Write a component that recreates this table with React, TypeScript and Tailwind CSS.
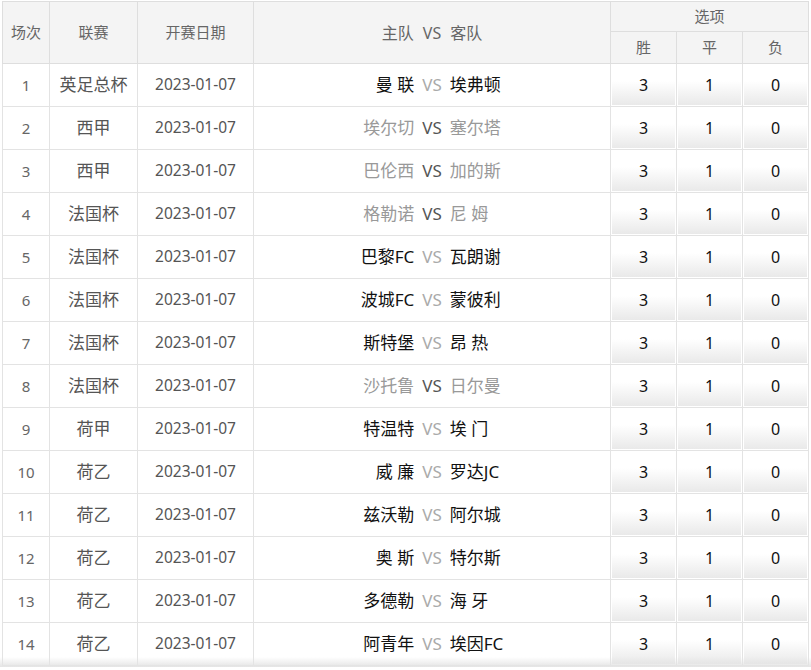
const rows: [string, string, string, boolean][] = [
  ["英足总杯", "曼 联", "埃弗顿", false],
  ["西甲", "埃尔切", "塞尔塔", true],
  ["西甲", "巴伦西", "加的斯", true],
  ["法国杯", "格勒诺", "尼 姆", true],
  ["法国杯", "巴黎FC", "瓦朗谢", false],
  ["法国杯", "波城FC", "蒙彼利", false],
  ["法国杯", "斯特堡", "昂 热", false],
  ["法国杯", "沙托鲁", "日尔曼", true],
  ["荷甲", "特温特", "埃 门", false],
  ["荷乙", "威 廉", "罗达JC", false],
  ["荷乙", "兹沃勒", "阿尔城", false],
  ["荷乙", "奥 斯", "特尔斯", false],
  ["荷乙", "多德勒", "海 牙", false],
  ["荷乙", "阿青年", "埃因FC", false],
];

const th = "border border-[#dedede] bg-[#f4f4f4] font-normal text-[#666]";
const td = "border border-[#e3e3e3] text-center";

function Odd({ value }: { value: string }) {
  return (
    <td className="border border-[#e3e3e3] p-[1px]">
      <div className="flex h-[40px] items-center justify-center bg-gradient-to-b from-white from-40% to-[#e9e9e9] text-[16px] text-[#111]">
        {value}
      </div>
    </td>
  );
}

export default function App() {
  return (
    <div
      className="relative h-[670px] overflow-hidden bg-white pl-[2px] pt-[1px]"
      style={{ fontFamily: '"Noto Sans", "Noto Sans CJK SC", sans-serif' }}
    >
      <table className="w-[806px] table-fixed border-collapse text-[15px]">
        <colgroup>
          <col className="w-[47px]" />
          <col className="w-[88px]" />
          <col className="w-[116px]" />
          <col className="w-[357px]" />
          <col className="w-[66px]" />
          <col className="w-[66px]" />
          <col className="w-[66px]" />
        </colgroup>
        <thead>
          <tr className="h-[30px]">
            <th rowSpan={2} className={th}>场次</th>
            <th rowSpan={2} className={th}>联赛</th>
            <th rowSpan={2} className={th}>开赛日期</th>
            <th rowSpan={2} className={th}>
              <div className="flex items-center justify-center gap-[9px] text-[16px]">
                <span>主队</span>
                <span>VS</span>
                <span>客队</span>
              </div>
            </th>
            <th colSpan={3} className={th}>选项</th>
          </tr>
          <tr className="h-[32px]">
            <th className={th}>胜</th>
            <th className={th}>平</th>
            <th className={th}>负</th>
          </tr>
        </thead>
        <tbody>
          {rows.map(([league, home, away, muted], i) => (
            <tr key={i} className="h-[43px]">
              <td className={`${td} text-[#666]`}>{i + 1}</td>
              <td className={`${td} text-[17px] text-[#555]`}>{league}</td>
              <td className={`${td} text-[15.5px] text-[#555]`}>2023-01-07</td>
              <td className={td}>
                <div className="flex items-center text-[17px]">
                  <span className={`flex-1 text-right ${muted ? "text-[#999]" : "text-[#111]"}`}>{home}</span>
                  <span className={`mx-[8px] ${muted ? "text-[#555]" : "text-[#aaa]"}`}>VS</span>
                  <span className={`flex-1 text-left ${muted ? "text-[#999]" : "text-[#111]"}`}>{away}</span>
                </div>
              </td>
              <Odd value="3" />
              <Odd value="1" />
              <Odd value="0" />
            </tr>
          ))}
        </tbody>
      </table>
      <div className="pointer-events-none absolute inset-x-0 bottom-[3px] h-[10px] bg-gradient-to-b from-transparent to-[#e4e4e4]" />
    </div>
  );
}
